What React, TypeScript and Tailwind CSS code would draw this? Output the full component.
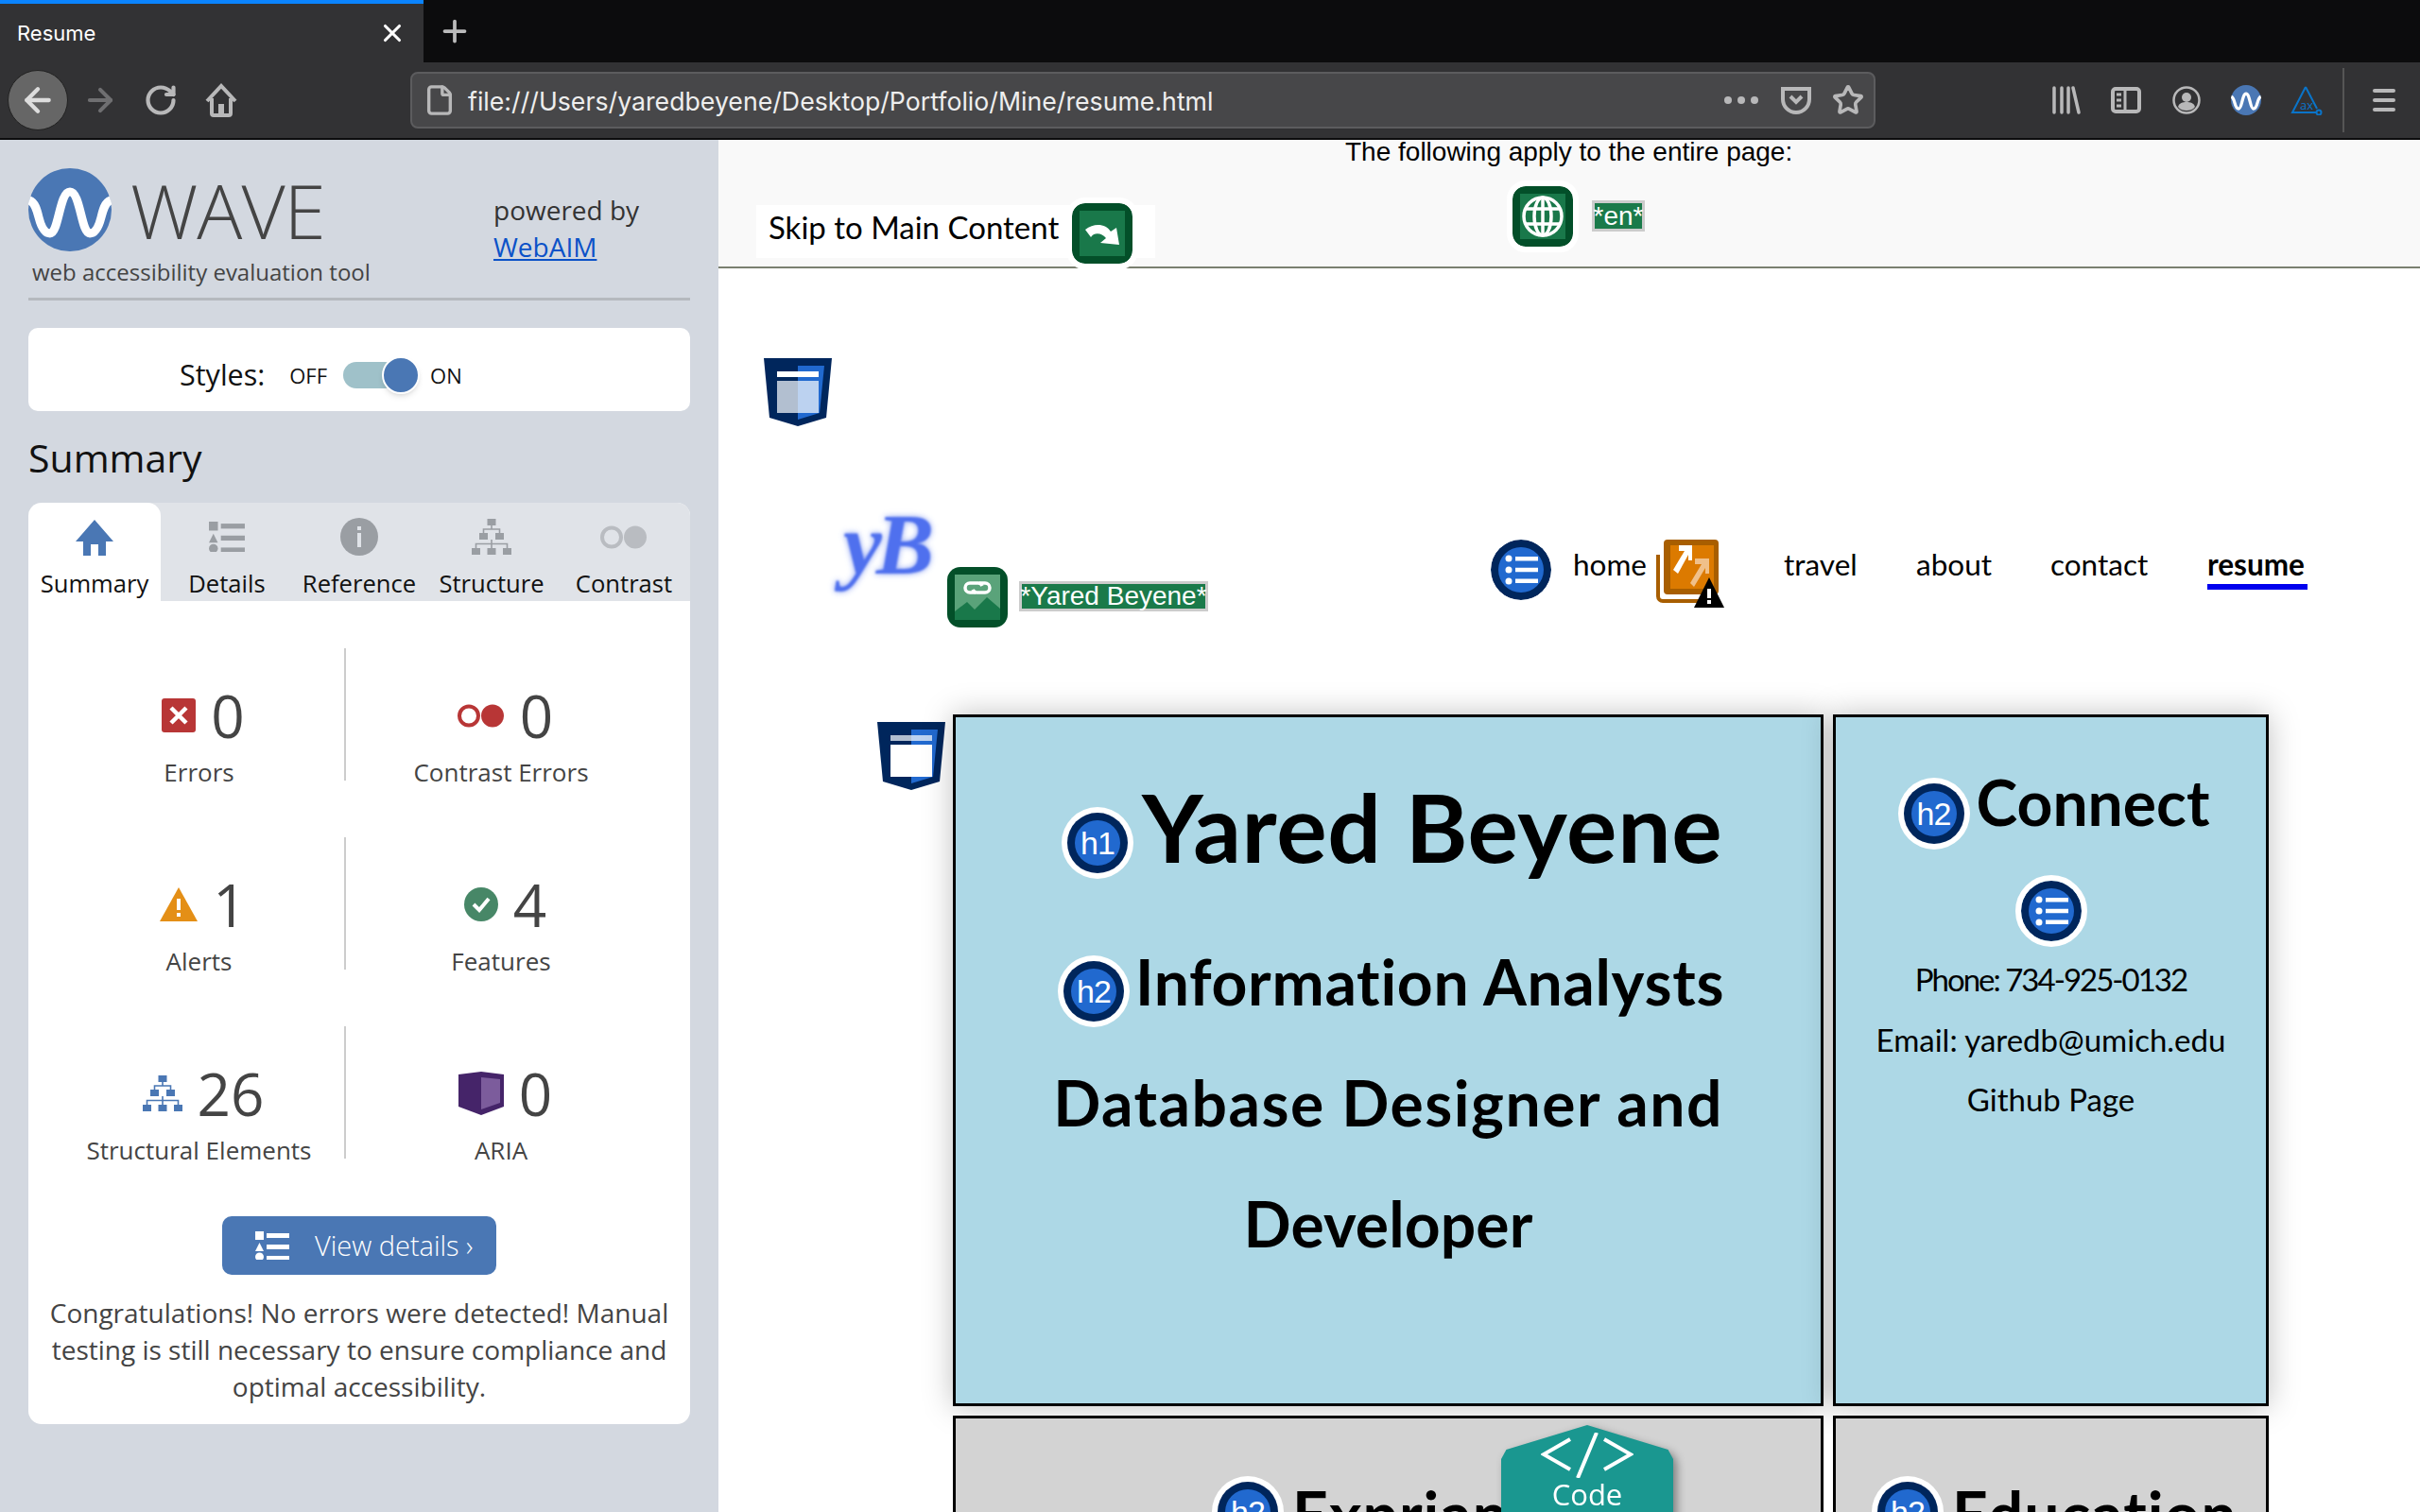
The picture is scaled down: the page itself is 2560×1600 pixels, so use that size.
import React from "react";
import { ArrowLeft, ArrowRight, File, Plus, RotateCw, Star, X } from "lucide-react";

const panelFont = { fontFamily: '"Open Sans", sans-serif' };

function WaveMark({ size }: { size: number }) {
  return (
    <svg width={size} height={size} viewBox="0 0 88 88" className="shrink-0">
      <circle cx="44" cy="44" r="44" fill="#4a77b4" />
      <path
        d="M1 34 C7 36 9 44 11 52 C14 64 18 69 23 69 C32 69 33 25 44 25 C55 25 56 69 65 69 C70 69 74 64 77 52 C79 44 81 36 87 34"
        fill="none"
        stroke="#fff"
        strokeWidth="9"
      />
    </svg>
  );
}

function GreenBadge({ children }: { children: React.ReactNode }) {
  return (
    <div className="shrink-0 w-[64px] h-[64px] rounded-[14px] bg-[#034f29] p-[8px] outline-[6px] outline-white">
      <div className="w-full h-full bg-[#19784a] flex items-center justify-center">{children}</div>
    </div>
  );
}

function ListBadge() {
  return (
    <div className="shrink-0 w-[64px] h-[64px] rounded-full bg-[#00265c] flex items-center justify-center outline-[6px] outline-white">
      <svg width="48" height="48" viewBox="0 0 48 48">
        <circle cx="24" cy="24" r="24" fill="#2169cf" />
        <g fill="#fff">
          <circle cx="11" cy="12" r="3.5" />
          <circle cx="11" cy="24" r="3.5" />
          <circle cx="11" cy="36" r="3.5" />
          <rect x="18" y="10" width="24" height="4.5" />
          <rect x="18" y="21.75" width="24" height="4.5" />
          <rect x="18" y="33.5" width="24" height="4.5" />
        </g>
      </svg>
    </div>
  );
}

function HeadingBadge({ level }: { level: string }) {
  return (
    <span className="inline-flex shrink-0 w-[76px] h-[76px] rounded-full bg-white items-center justify-center">
      <span className="w-[64px] h-[64px] rounded-full bg-[#00265c] flex items-center justify-center">
        <span
          className="w-[48px] h-[48px] rounded-full bg-[#2169cf] flex items-center justify-center text-white text-[34px] leading-none font-normal tracking-[-1px]"
          style={{ fontFamily: '"Liberation Sans", sans-serif' }}
        >
          {level}
        </span>
      </span>
    </span>
  );
}

function Shield({ inner }: { inner: "main" | "header" }) {
  return (
    <svg width="72" height="72" viewBox="0 0 72 72" className="shrink-0">
      <path d="M0 0H72L66 63L36 72L6 63Z" fill="#00265c" />
      <path d="M36 8H64L59 58L36 65Z" fill="#2169cf" />
      {inner === "header" ? (
        <>
          <rect x="14" y="14" width="44" height="6" fill="#fff" />
          <rect x="14" y="24" width="22" height="34" fill="#b2bfd0" />
          <rect x="36" y="24" width="22" height="34" fill="#bcd2f0" />
        </>
      ) : (
        <>
          <rect x="14" y="14" width="22" height="6" fill="#b2bfd0" />
          <rect x="36" y="14" width="22" height="6" fill="#bcd2f0" />
          <rect x="14" y="24" width="44" height="34" fill="#fff" />
        </>
      )}
    </svg>
  );
}

function TreeIcon({ color }: { color: string }) {
  return (
    <svg width="42" height="38" viewBox="0 0 42 38" className="shrink-0">
      <g fill={color}>
        <rect x="16.5" y="0" width="9" height="7" />
        <rect x="8" y="15" width="9" height="7" />
        <rect x="25" y="15" width="9" height="7" />
        <rect x="0" y="31" width="9" height="7" />
        <rect x="16.5" y="31" width="9" height="7" />
        <rect x="33" y="31" width="9" height="7" />
      </g>
      <path d="M21 7v4M12.5 15v-4h17v4M21 22v9M4.5 31v-4.500h33V31" fill="none" stroke={color} strokeWidth="1.600" />
    </svg>
  );
}

function ContrastDots({ color, size }: { color: string; size: number }) {
  return (
    <svg width={size} height={size * 0.5} viewBox="0 0 50 25" className="shrink-0">
      <circle cx="12" cy="12.5" r="10" fill="none" stroke={color} strokeWidth="4" />
      <circle cx="37" cy="12.5" r="12" fill={color} />
    </svg>
  );
}

function DetailsIcon({ color, size }: { color: string; size: number }) {
  return (
    <svg width={size} height={size * 0.86} viewBox="0 0 36 31" fill={color} className="shrink-0">
      <rect x="0" y="0" width="9" height="9" />
      <path d="M4.5 12L9 21H0z" />
      <circle cx="4.5" cy="27" r="4.5" />
      <rect x="12" y="2" width="24" height="5" />
      <rect x="12" y="14" width="24" height="5" />
      <rect x="12" y="26" width="24" height="5" />
    </svg>
  );
}

function Stat(props: { icon: React.ReactNode; value: string; label: string; divider?: boolean }) {
  return (
    <div className={`h-[140px] flex flex-col items-center ${props.divider ? "border-r-2 border-[#ccc]" : ""}`}>
      <div className="flex items-center gap-[16px] h-[84px] mt-[29px] ml-[9px] shrink-0">
        {props.icon}
        <span className="text-[62px] leading-none text-[#444]">{props.value}</span>
      </div>
      <div className="text-[26px] leading-[36px] text-[#444] shrink-0">{props.label}</div>
    </div>
  );
}

function Tab(props: { icon: React.ReactNode; label: string; active?: boolean }) {
  return (
    <div
      className={`w-[140px] flex flex-col items-center pt-[14px] ${props.active ? "bg-white rounded-tr-[14px] rounded-tl-[14px]" : ""}`}
    >
      <div className="h-[44px] flex items-center justify-center">{props.icon}</div>
      <div className="mt-[11px] text-[25.6px] leading-[34px] text-[#111]">{props.label}</div>
    </div>
  );
}

function Toolbar() {
  return (
    <div className="h-[82px] bg-[#323234] border-b-2 border-[#0c0c0d] flex items-center text-[#b8b8b9]">
      <div className="ml-[8px] w-[64px] h-[64px] rounded-full bg-[#666] border border-[#222] flex items-center justify-center">
        <ArrowLeft size={40} strokeWidth={2.6} className="text-[#ddd]" />
      </div>
      <ArrowRight size={38} strokeWidth={2.6} className="ml-[15px] text-[#6f6f71]" />
      <RotateCw size={36} strokeWidth={2.8} className="ml-[27px]" />
      <svg width="34" height="36" viewBox="0 0 34 36" className="ml-[29px]" fill="none" stroke="currentColor" strokeWidth="4">
        <path d="M2 19L17 3l15 16M7 16v16a2 2 0 0 0 2 2h16a2 2 0 0 0 2-2V16" />
        <rect x="14" y="22" width="6" height="12" fill="currentColor" stroke="none" />
      </svg>
      <div className="ml-[183px] w-[1550px] h-[60px] rounded-[8px] bg-[#474749] border-2 border-[#5c5c5e] flex items-center">
        <File size={34} strokeWidth={2.4} className="ml-[12px]" />
        <span
          className="ml-[13px] mt-[2px] text-[26.7px] text-[#eee] whitespace-nowrap"
          style={{ fontFamily: '"Inter", sans-serif' }}
        >
          file:///Users/yaredbeyene/Desktop/Portfolio/Mine/resume.html
        </span>
        <div className="ml-auto flex items-center gap-[6px]">
          <span className="w-[8px] h-[8px] rounded-full bg-[#b8b8b9]" />
          <span className="w-[8px] h-[8px] rounded-full bg-[#b8b8b9]" />
          <span className="w-[8px] h-[8px] rounded-full bg-[#b8b8b9]" />
        </div>
        <svg width="32" height="30" viewBox="0 0 32 30" className="ml-[24px]" fill="none" stroke="currentColor" strokeWidth="4">
          <path d="M2 3h28v11a14 14 0 0 1-28 0zM10 11l6 6 6-6" />
        </svg>
        <Star size={34} strokeWidth={2.6} className="ml-[22px] mr-[10px]" />
      </div>
      <svg width="30" height="30" viewBox="0 0 30 30" className="ml-[187px]" fill="none" stroke="currentColor" strokeWidth="3.5" strokeLinecap="round">
        <path d="M2 2v26M10 2v26M17 2v26M22 2l6 26" />
      </svg>
      <svg width="32" height="28" viewBox="0 0 32 28" className="ml-[32px]" fill="none" stroke="currentColor" strokeWidth="4">
        <rect x="2" y="2" width="28" height="24" rx="3" />
        <path d="M15 2v24M6 8h5M6 14h5M6 20h5" strokeWidth="3" />
      </svg>
      <svg width="30" height="30" viewBox="0 0 30 30" className="ml-[33px]" fill="currentColor">
        <circle cx="15" cy="15" r="13.5" fill="none" stroke="currentColor" strokeWidth="2.5" />
        <circle cx="15" cy="12" r="5" />
        <path d="M6 22c1-4 5-5 9-5s8 1 9 5c-2 3-6 4-9 4s-7-1-9-4z" />
      </svg>
      <div className="ml-[32px]">
        <WaveMark size={32} />
      </div>
      <svg width="34" height="32" viewBox="0 0 34 32" className="ml-[31px]" fill="none" stroke="#0a74c9" strokeWidth="2">
        <path d="M16 2L2 29h26M16 2l12 23" />
        <circle cx="30" cy="29" r="2.5" />
        <text x="10" y="26" fontSize="13" fill="#0a74c9" stroke="none" fontFamily="Open Sans">
          ax
        </text>
      </svg>
      <div className="ml-[21px] w-[2px] h-[68px] bg-[#555]" />
      <div className="ml-[30px] w-[24px] flex flex-col gap-[6px]">
        <span className="h-[4px] rounded-full bg-[#b8b8b9]" />
        <span className="h-[4px] rounded-full bg-[#b8b8b9]" />
        <span className="h-[4px] rounded-full bg-[#b8b8b9]" />
      </div>
    </div>
  );
}

function WavePanel() {
  return (
    <aside className="w-[760px] shrink-0 bg-[#d3d8e0] px-[30px]" style={panelFont}>
      <div className="h-[170px] border-b-[3px] border-[#b5b9be] flex">
        <div className="w-[492px]">
          <div className="flex items-center mt-[30px] gap-[20px]">
            <WaveMark size={88} />
            <span className="text-[80px] leading-[88px] font-light text-[#444] tracking-[-1px]">WAVE</span>
          </div>
          <div className="ml-[4px] mt-[6px] text-[24px] leading-[32px] text-[#444]">web accessibility evaluation tool</div>
        </div>
        <div className="mt-[55px] text-[28px] leading-[39px] text-[#333]">
          <div>powered by</div>
          <a className="text-[#0b52c8] underline">WebAIM</a>
        </div>
      </div>

      <div className="mt-[29px] h-[88px] bg-white rounded-[10px] flex items-center pl-[160px] pt-[12px]">
        <span className="text-[30.500px] text-[#111]">Styles:</span>
        <span className="ml-[26px] text-[22px] text-[#111]">OFF</span>
        <div className="ml-[17px] w-[58px] h-[28px] rounded-full bg-[#9fc1c9] relative">
          <div className="absolute left-[41px] top-[-6px] w-[40px] h-[40px] rounded-full bg-[#4a77b4] border-2 border-white shadow-md" />
        </div>
        <span className="ml-[34px] text-[22px] text-[#111]">ON</span>
      </div>

      <h2 className="mt-[21px] text-[41px] leading-[56px] text-[#111]">Summary</h2>

      <div className="mt-[20px] bg-white rounded-[14px] h-[975px] overflow-hidden">
        <div className="h-[104px] bg-[#e0e3e8] flex">
          <Tab
            active
            label="Summary"
            icon={
              <svg width="40" height="40" viewBox="0 0 40 40" fill="#4a77b4">
                <path d="M20 2L40 25H32V40H24V28H16V40H8V25H0z" />
              </svg>
            }
          />
          <Tab label="Details" icon={<DetailsIcon color="#9a9ea3" size={38} />} />
          <Tab
            label="Reference"
            icon={
              <svg width="40" height="40" viewBox="0 0 40 40">
                <circle cx="20" cy="20" r="20" fill="#9a9ea3" />
                <rect x="18" y="9" width="4" height="4" fill="#e0e3e8" />
                <rect x="18" y="16" width="4" height="15" fill="#e0e3e8" />
              </svg>
            }
          />
          <Tab label="Structure" icon={<TreeIcon color="#9a9ea3" />} />
          <Tab label="Contrast" icon={<ContrastDots color="#b9bcc1" size={50} />} />
        </div>

        <div className="mt-[50px] ml-[27px] grid grid-cols-[309px_328px] gap-y-[60px]">
          <Stat
            divider
            value="0"
            label="Errors"
            icon={
              <svg width="36" height="36" viewBox="0 0 36 36">
                <rect width="36" height="36" rx="3" fill="#b83636" />
                <path d="M10 10l16 16M26 10L10 26" stroke="#fff" strokeWidth="4.5" />
              </svg>
            }
          />
          <Stat value="0" label="Contrast Errors" icon={<ContrastDots color="#b83636" size={50} />} />
          <Stat
            divider
            value="1"
            label="Alerts"
            icon={
              <svg width="40" height="36" viewBox="0 0 40 36">
                <path d="M20 0L40 36H0z" fill="#e48f16" />
                <rect x="18" y="12" width="4" height="12" fill="#fff" />
                <rect x="18" y="27" width="4" height="4" fill="#fff" />
              </svg>
            }
          />
          <Stat
            value="4"
            label="Features"
            icon={
              <svg width="36" height="36" viewBox="0 0 36 36">
                <circle cx="18" cy="18" r="18" fill="#478767" />
                <path d="M10 18l6 6 10-12" fill="none" stroke="#fff" strokeWidth="4" />
              </svg>
            }
          />
          <Stat divider value="26" label="Structural Elements" icon={<TreeIcon color="#4a77b4" />} />
          <Stat
            value="0"
            label="ARIA"
            icon={
              <svg width="48" height="46" viewBox="0 0 48 46">
                <path d="M24 0L48 3V37L24 46L0 37V3z" fill="#452469" />
                <path d="M24 6L44 8V33L24 40z" fill="#7c5c9c" />
              </svg>
            }
          />
        </div>

        <div className="mt-[61px] mx-auto w-[290px] h-[62px] rounded-[10px] bg-[#4a77b4] flex items-center pl-[35px] text-white text-[29px] font-light">
          <DetailsIcon color="#fff" size={36} />
          <span className="ml-[27px]">View details ›</span>
        </div>

        <p className="mt-[21px] px-[20px] text-center text-[28px] leading-[39px] text-[#444]">
          Congratulations! No errors were detected! Manual testing is still necessary to ensure compliance and optimal
          accessibility.
        </p>
      </div>
    </aside>
  );
}

const pageFont = { fontFamily: '"Lato", sans-serif' };

function NavLink(props: { label: string; width: number; active?: boolean }) {
  return (
    <span
      className={`inline-block text-[31.500px] leading-[42px] text-black whitespace-nowrap ${props.active ? "font-bold border-b-[6px] border-[#0000ee]" : ""}`}
      style={{ width: props.width }}
    >
      {props.label}
    </span>
  );
}

function PageArea() {
  return (
    <main className="flex-1 relative overflow-hidden bg-white" style={pageFont}>
      <div className="h-[136px] bg-[#f9f9f9] border-b-2 border-[#7a8070] relative">
        <div
          className="absolute left-[663px] top-[-5px] text-[28px] leading-[36px] text-black whitespace-nowrap"
          style={{ fontFamily: '"Liberation Sans", sans-serif' }}
        >
          The following apply to the entire page:
        </div>
        <div className="absolute left-[40px] top-[69px] w-[422px] h-[56px] bg-white flex items-center pl-[13px] pb-[8px]">
          <span className="text-[33px] text-black whitespace-nowrap">Skip to Main Content</span>
        </div>
        <div className="absolute left-[374px] top-[67px]">
          <GreenBadge>
            <svg width="36" height="24" viewBox="0 0 36 24" fill="#fff">
              <path d="M0 8C10 0 22 2 27 10L33 6L36 24L16 22L22 17C18 12 10 10 6 16z" />
            </svg>
          </GreenBadge>
        </div>
        <div className="absolute left-[840px] top-[49px]">
          <GreenBadge>
            <svg width="44" height="44" viewBox="0 0 44 44" fill="none" stroke="#fff" strokeWidth="3.5">
              <circle cx="22" cy="22" r="20" />
              <ellipse cx="22" cy="22" rx="9" ry="20" />
              <path d="M22 2v40M4 14h36M4 30h36" />
            </svg>
          </GreenBadge>
        </div>
        <div
          className="absolute left-[924px] top-[64px] w-[56px] h-[33px] bg-[#1a7a4a] border-[3px] border-[#ccc] flex items-center justify-center text-white text-[28px]"
          style={{ fontFamily: '"Liberation Sans", sans-serif' }}
        >
          *en*
        </div>
      </div>

      <div className="mt-[95px] ml-[48px]">
        <Shield inner="header" />
      </div>

      <div className="mt-[91px] flex h-[207px]">
        <div className="ml-[126px] w-[102px] h-[83px] -mt-[8px] flex items-center justify-center">
          <span
            className="text-[92px] leading-none italic font-bold text-[#4f70ee] tracking-[-6px] blur-[1px]"
            style={{ fontFamily: '"Liberation Serif", serif', textShadow: "0 0 6px #7d96f0" }}
          >
            yB
          </span>
        </div>
        <div className="ml-[14px] mt-[58px]">
          <div className="w-[64px] h-[64px] rounded-[14px] bg-[#034f29] p-[8px]">
            <svg width="48" height="48" viewBox="0 0 48 48" className="block">
              <rect width="48" height="48" fill="#5aa37a" />
              <path d="M0 39L13 29L21 37L34 24L48 36V48H0z" fill="#19784a" />
              <g fill="none" stroke="#fff" strokeWidth="3.500">
                <path d="M22 19h-6a5 5 0 0 1 0-10h9a5 5 0 0 1 4 3" />
                <path d="M26 9h6a5 5 0 0 1 0 10h-9a5 5 0 0 1-4-3" />
              </g>
            </svg>
          </div>
        </div>
        <div
          className="ml-[12px] mt-[73px] w-[200px] h-[32px] bg-[#1a7a4a] border-[3px] border-[#ccc] flex items-center justify-center text-white text-[28px] whitespace-nowrap"
          style={{ fontFamily: '"Liberation Sans", sans-serif' }}
        >
          *Yared Beyene*
        </div>
        <div className="ml-[299px] mt-[29px] flex items-start">
          <ListBadge />
          <span className="ml-[23px] mt-[5px]">
            <NavLink label="home" width={73} />
          </span>
          <svg width="72" height="72" viewBox="0 0 72 72" className="ml-[15px] shrink-0">
            <path d="M2 16v44a5 5 0 0 0 5 5h44" fill="none" stroke="#a85e00" strokeWidth="4" />
            <rect x="8" y="0" width="58" height="58" rx="4" fill="#a85e00" />
            <rect x="15" y="6" width="46" height="46" fill="#dc7a00" />
            <path d="M18 32L30 12H24V6H38V12V22H34V16L23 36z" fill="#fff" />
            <path d="M36 46L48 26H41V20H56V36H52V30L40 50z" fill="#f0c08a" />
            <path d="M56 40L72 72H40z" fill="#000" />
            <rect x="54" y="52" width="4" height="10" fill="#fff" />
            <rect x="54" y="64" width="4" height="4" fill="#fff" />
          </svg>
          <div className="ml-[63px] mt-[5px]">
            <NavLink label="travel" width={80} />
          </div>
          <div className="ml-[60px] mt-[5px]">
            <NavLink label="about" width={83} />
          </div>
          <div className="ml-[59px] mt-[5px]">
            <NavLink label="contact" width={106} />
          </div>
          <div className="ml-[60px] mt-[5px]">
            <NavLink active label="resume" width={106} />
          </div>
        </div>
      </div>

      <div className="mt-[15px] ml-[168px] flex items-start">
        <Shield inner="main" />
        <div className="ml-[8px] -mt-[8px]">
          <div className="grid grid-cols-[921px_461px] gap-[10px] grid-rows-[732px_300px]">
            <section className="border-[3px] border-black bg-[#add8e6] shadow-[0_0_30px_rgba(0,0,0,0.25)] text-black">
              <h1 className="mt-[55px] ml-[112px] flex items-start">
                <span className="mt-[40px]">
                  <HeadingBadge level="h1" />
                </span>
                <span className="ml-[9px] text-[100px] leading-[120px] font-bold tracking-[0.7px] whitespace-nowrap">
                  Yared Beyene
                </span>
              </h1>
              <h2 className="text-[66px] leading-[128px] font-bold mt-[41px]">
                <div className="flex justify-center ml-[6px] h-[128px]">
                  <div className="flex mt-[36px] h-[76px]">
                    <HeadingBadge level="h2" />
                  </div>
                  <span className="ml-[6px] tracking-[0.7px]">Information Analysts</span>
                </div>
                <div className="text-center tracking-[1.5px]">Database Designer and</div>
                <div className="text-center tracking-[0.1px]">Developer</div>
              </h2>
            </section>
            <section className="border-[3px] border-black bg-[#add8e6] shadow-[0_0_30px_rgba(0,0,0,0.25)] text-black flex flex-col items-center">
              <h2 className="mt-[64px] ml-[6px] flex items-start">
                <HeadingBadge level="h2" />
                <span className="ml-[7px] -mt-[18px] text-[66px] leading-[88px] font-bold">Connect</span>
              </h2>
              <div className="mt-[33px]">
                <ListBadge />
              </div>
              <div className="mt-[9px] text-[33px] leading-[63.500px] text-center whitespace-nowrap">
                <div className="tracking-[-2px]">Phone: 734-925-0132</div>
                <div>Email: yaredb@umich.edu</div>
                <div>Github Page</div>
              </div>
            </section>
            <section className="border-[3px] border-black bg-[#d3d3d3] text-black">
              <h2 className="mt-[61px] ml-[271px] flex items-start">
                <HeadingBadge level="h2" />
                <span className="ml-[9px] -mt-[4px] text-[66px] leading-[88px] font-bold tracking-[1px]">Expriance</span>
              </h2>
            </section>
            <section className="border-[3px] border-black bg-[#d3d3d3] text-black">
              <h2 className="mt-[61px] ml-[38px] flex items-start">
                <HeadingBadge level="h2" />
                <span className="ml-[9px] -mt-[4px] text-[66px] leading-[88px] font-bold tracking-[1px]">Education</span>
              </h2>
            </section>
          </div>
        </div>
      </div>

      {/* Code tag floats over the page, same as the browser extension */}
      <div className="absolute left-[828px] top-[1360px] drop-shadow-[4px_4px_5px_rgba(0,0,0,0.4)]">
        <div className="w-[182px] h-[100px] bg-[#1a9790] [clip-path:polygon(50%_0,97%_26%,100%_36%,100%_100%,0_100%,0_36%,3%_26%)] flex flex-col items-center pt-[8px] text-white">
          <svg width="98" height="48" viewBox="0 0 98 48" fill="none" stroke="#fff" strokeWidth="4">
            <path d="M31 7L3 23l28 16M67 7l28 16-28 16M59 0L39 48" />
          </svg>
          <span className="mt-[2px] text-[31px] leading-[30px]" style={panelFont}>
            Code
          </span>
        </div>
      </div>
    </main>
  );
}

export default function App() {
  return (
    <div className="w-[2560px] h-[1600px] overflow-hidden flex flex-col bg-[#0c0c0d]">
      <div className="h-[66px] flex items-stretch">
        <div className="w-[448px] bg-[#323234] border-t-4 border-[#0a84ff] flex items-center text-white">
          <span className="ml-[18px] text-[22px]" style={{ fontFamily: '"Inter", sans-serif' }}>
            Resume
          </span>
          <X size={30} strokeWidth={2.5} className="ml-auto mr-[18px]" />
        </div>
        <Plus size={36} strokeWidth={2.5} className="ml-[15px] mt-[15px] text-[#bbb]" />
      </div>
      <Toolbar />
      <div className="flex-1 flex min-h-0">
        <WavePanel />
        <PageArea />
      </div>
    </div>
  );
}
